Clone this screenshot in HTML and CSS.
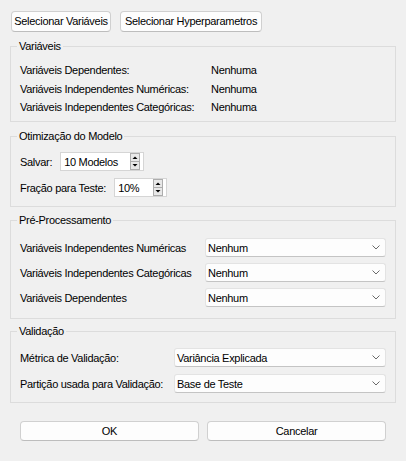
FILE: index.html
```html
<!DOCTYPE html>
<html lang="pt">
<head>
<meta charset="utf-8">
<title>Configuração</title>
<link rel="stylesheet" href="styles.css">
</head>
<body>
<div class="dialog">
  <div class="top-actions">
    <button class="btn btn-vars">Selecionar Variáveis</button>
    <button class="btn btn-hyper">Selecionar Hyperparametros</button>
  </div>

  <fieldset class="group group-vars">
    <legend>Variáveis</legend>
    <div class="info-grid">
      <span>Variáveis Dependentes:</span><span>Nenhuma</span>
      <span>Variáveis Independentes Numéricas:</span><span>Nenhuma</span>
      <span>Variáveis Independentes Categóricas:</span><span>Nenhuma</span>
    </div>
  </fieldset>

  <fieldset class="group group-opt">
    <legend>Otimização do Modelo</legend>
    <div class="spin-row">
      <label>Salvar:</label>
      <div class="spin spin-models">
        <span class="spin-value">10 Modelos</span>
        <svg class="spin-arrows" width="10" height="17" viewBox="0 0 10 17"><rect x="0.5" y="0.5" width="9" height="16" fill="#e8e8e8" stroke="#adadad"/><line x1="1" y1="8.5" x2="9" y2="8.5" stroke="#adadad"/><polygon points="5,3.5 7.5,6 2.5,6" fill="#000"/><polygon points="2.5,11 7.5,11 5,13.5" fill="#000"/></svg>
      </div>
    </div>
    <div class="spin-row">
      <label>Fração para Teste:</label>
      <div class="spin spin-test">
        <span class="spin-value">10%</span>
        <svg class="spin-arrows" width="10" height="17" viewBox="0 0 10 17"><rect x="0.5" y="0.5" width="9" height="16" fill="#e8e8e8" stroke="#adadad"/><line x1="1" y1="8.5" x2="9" y2="8.5" stroke="#adadad"/><polygon points="5,3.5 7.5,6 2.5,6" fill="#000"/><polygon points="2.5,11 7.5,11 5,13.5" fill="#000"/></svg>
      </div>
    </div>
  </fieldset>

  <fieldset class="group group-pre">
    <legend>Pré-Processamento</legend>
    <div class="form-grid form-pre">
      <span>Variáveis Independentes Numéricas</span>
      <div class="combo"><span>Nenhum</span><svg width="8" height="5" viewBox="0 0 8 5"><polyline points="0.5,0.5 4,4 7.5,0.5" fill="none" stroke="#6a6a6a"/></svg></div>
      <span>Variáveis Independentes Categóricas</span>
      <div class="combo"><span>Nenhum</span><svg width="8" height="5" viewBox="0 0 8 5"><polyline points="0.5,0.5 4,4 7.5,0.5" fill="none" stroke="#6a6a6a"/></svg></div>
      <span>Variáveis Dependentes</span>
      <div class="combo"><span>Nenhum</span><svg width="8" height="5" viewBox="0 0 8 5"><polyline points="0.5,0.5 4,4 7.5,0.5" fill="none" stroke="#6a6a6a"/></svg></div>
    </div>
  </fieldset>

  <fieldset class="group group-val">
    <legend>Validação</legend>
    <div class="form-grid form-val">
      <span>Métrica de Validação:</span>
      <div class="combo"><span>Variância Explicada</span><svg width="8" height="5" viewBox="0 0 8 5"><polyline points="0.5,0.5 4,4 7.5,0.5" fill="none" stroke="#6a6a6a"/></svg></div>
      <span>Partição usada para Validação:</span>
      <div class="combo"><span>Base de Teste</span><svg width="8" height="5" viewBox="0 0 8 5"><polyline points="0.5,0.5 4,4 7.5,0.5" fill="none" stroke="#6a6a6a"/></svg></div>
    </div>
  </fieldset>

  <div class="footer">
    <button class="btn btn-wide">OK</button>
    <button class="btn btn-wide">Cancelar</button>
  </div>
</div>
</body>
</html>
```

FILE: styles.css
```css
* { box-sizing: border-box; }
html, body { margin: 0; }
body {
  background: #f0f0f0;
  font-family: "Liberation Sans", Arial, sans-serif;
  font-size: 11px;
  letter-spacing: -0.3px;
  color: #000;
  width: 406px;
  height: 461px;
  overflow: hidden;
}
.dialog { padding: 11px 10px 0 10px; }

.top-actions { display: flex; gap: 9px; padding-left: 1px; }

.btn {
  font: inherit;
  letter-spacing: inherit;
  color: #000;
  height: 21px;
  padding: 0 2px;
  background: #fdfdfd;
  border: 1px solid #d0d0d0;
  border-bottom-color: #bdbdbd;
  border-radius: 4px;
  line-height: 19px;
  white-space: nowrap;
}
.btn-vars { width: 100px; }
.btn-hyper { width: 142px; }

.group {
  margin: 6px 0 0 0;
  border: 1px solid #dcdcdc;
  padding: 0 9px;
  min-width: 0;
}
.group legend {
  padding: 0 2px;
  margin-left: -3px;
  line-height: 16px;
}

.group-vars { padding-top: 7px; padding-bottom: 5px; }
.info-grid {
  display: grid;
  grid-template-columns: 191px 1fr;
  grid-template-rows: 18px 19px 18px;
  align-items: center;
  white-space: nowrap;
}

.group-opt { padding-top: 8px; padding-bottom: 9px; }
.spin-row { display: flex; align-items: center; gap: 8px; height: 19px; }
.spin-row + .spin-row { margin-top: 7px; }
.spin {
  height: 19px;
  background: #fff;
  border: 1px solid #d5d5d5;
  display: flex;
  align-items: center;
  justify-content: space-between;
  padding: 0 3px 0 3px;
}
.spin-models { width: 84px; }
.spin-test { width: 53px; }
.spin-arrows { display: block; flex: none; }

.group-pre { margin-top: 5px; padding-top: 10px; padding-bottom: 11px; }
.group-val { margin-top: 4px; padding-top: 9px; padding-bottom: 9px; }

.form-grid {
  display: grid;
  grid-auto-rows: 19px;
  align-items: center;
  white-space: nowrap;
}
.form-pre { grid-template-columns: 185px 1fr; row-gap: 6px; }
.form-val { grid-template-columns: 154px 1fr; row-gap: 7px; }

.combo {
  height: 19px;
  background: #fdfdfd;
  border: 1px solid #e3e3e3;
  border-bottom-color: #c4c4c4;
  border-radius: 3px;
  display: flex;
  align-items: center;
  justify-content: space-between;
  padding: 0 5px 0 2px;
}
.combo svg { display: block; flex: none; }

.footer { display: flex; gap: 8px; padding: 18px 0 0 10px; }
.btn-wide { width: 179px; height: 20px; line-height: 18px; }
```
